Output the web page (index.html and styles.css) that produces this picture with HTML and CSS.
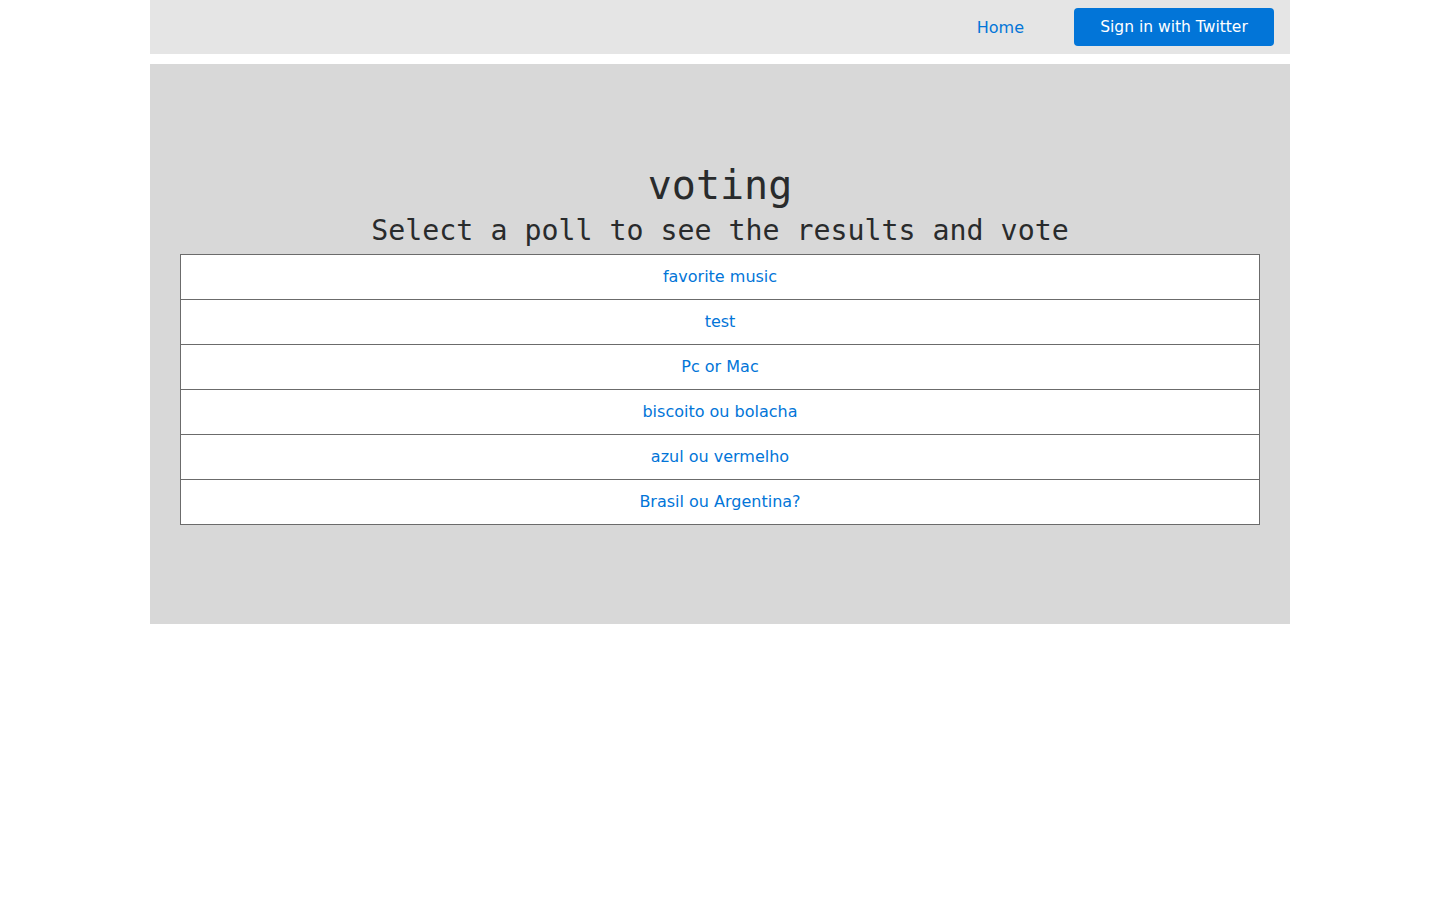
FILE: index.html
```html
<!DOCTYPE html>
<html>
<head>
<meta charset="utf-8">
<title>voting</title>
<link rel="stylesheet" href="styles.css">
</head>
<body>
<div class="container">
  <nav class="navbar">
    <a class="nav-link" href="#">Home</a>
    <a class="btn-twitter" href="#">Sign in with Twitter</a>
  </nav>
  <main class="jumbo">
    <h1 class="title">voting</h1>
    <h2 class="subtitle">Select a poll to see the results and vote</h2>
    <ul class="polls">
      <li class="poll"><a href="#">favorite music</a></li>
      <li class="poll"><a href="#">test</a></li>
      <li class="poll"><a href="#">Pc or Mac</a></li>
      <li class="poll"><a href="#">biscoito ou bolacha</a></li>
      <li class="poll"><a href="#">azul ou vermelho</a></li>
      <li class="poll"><a href="#">Brasil ou Argentina?</a></li>
    </ul>
  </main>
</div>
</body>
</html>
```
FILE: styles.css
```css
* { box-sizing: border-box; }
html, body { margin: 0; padding: 0; background: #fff; }
body {
  font-family: "DejaVu Sans", sans-serif;
  font-size: 16px;
  line-height: 1.5;
  color: #292b2c;
}
a { color: #0275d8; text-decoration: none; }
.container {
  width: 1140px;
  margin: 0 auto;
}
.navbar {
  height: 54px;
  background: #e5e5e5;
  display: flex;
  align-items: center;
  justify-content: flex-end;
  padding: 0 16px;
  gap: 34px;
}
.nav-link {
  padding: 8px 16px;
  line-height: 24px;
  margin-top: 2px;
}
.btn-twitter {
  display: flex;
  align-items: center;
  justify-content: center;
  width: 200px;
  height: 38px;
  padding-top: 2px;
  background: #0275d8;
  color: #fff;
  border-radius: 4px;
  font-size: 15.5px;
  margin-top: -1px;
}
.jumbo {
  margin-top: 10px;
  background: #d8d8d8;
  padding: 99px 30px;
  text-align: center;
}
.title {
  font-family: "DejaVu Sans Mono", monospace;
  font-weight: 400;
  font-size: 40px;
  line-height: 44px;
  margin: 0 0 8px;
}
.subtitle {
  font-family: "DejaVu Sans Mono", monospace;
  font-weight: 400;
  font-size: 28.25px;
  line-height: 31px;
  margin: 0 0 8px;
}
.polls {
  list-style: none;
  margin: 0;
  padding: 0;
  border: 1px solid #6b6b6b;
  background: #fff;
}
.poll {
  height: 45px;
  display: flex;
  align-items: center;
  justify-content: center;
  border-top: 1px solid #6b6b6b;
}
.poll:first-child { border-top: none; height: 44px; }
```
